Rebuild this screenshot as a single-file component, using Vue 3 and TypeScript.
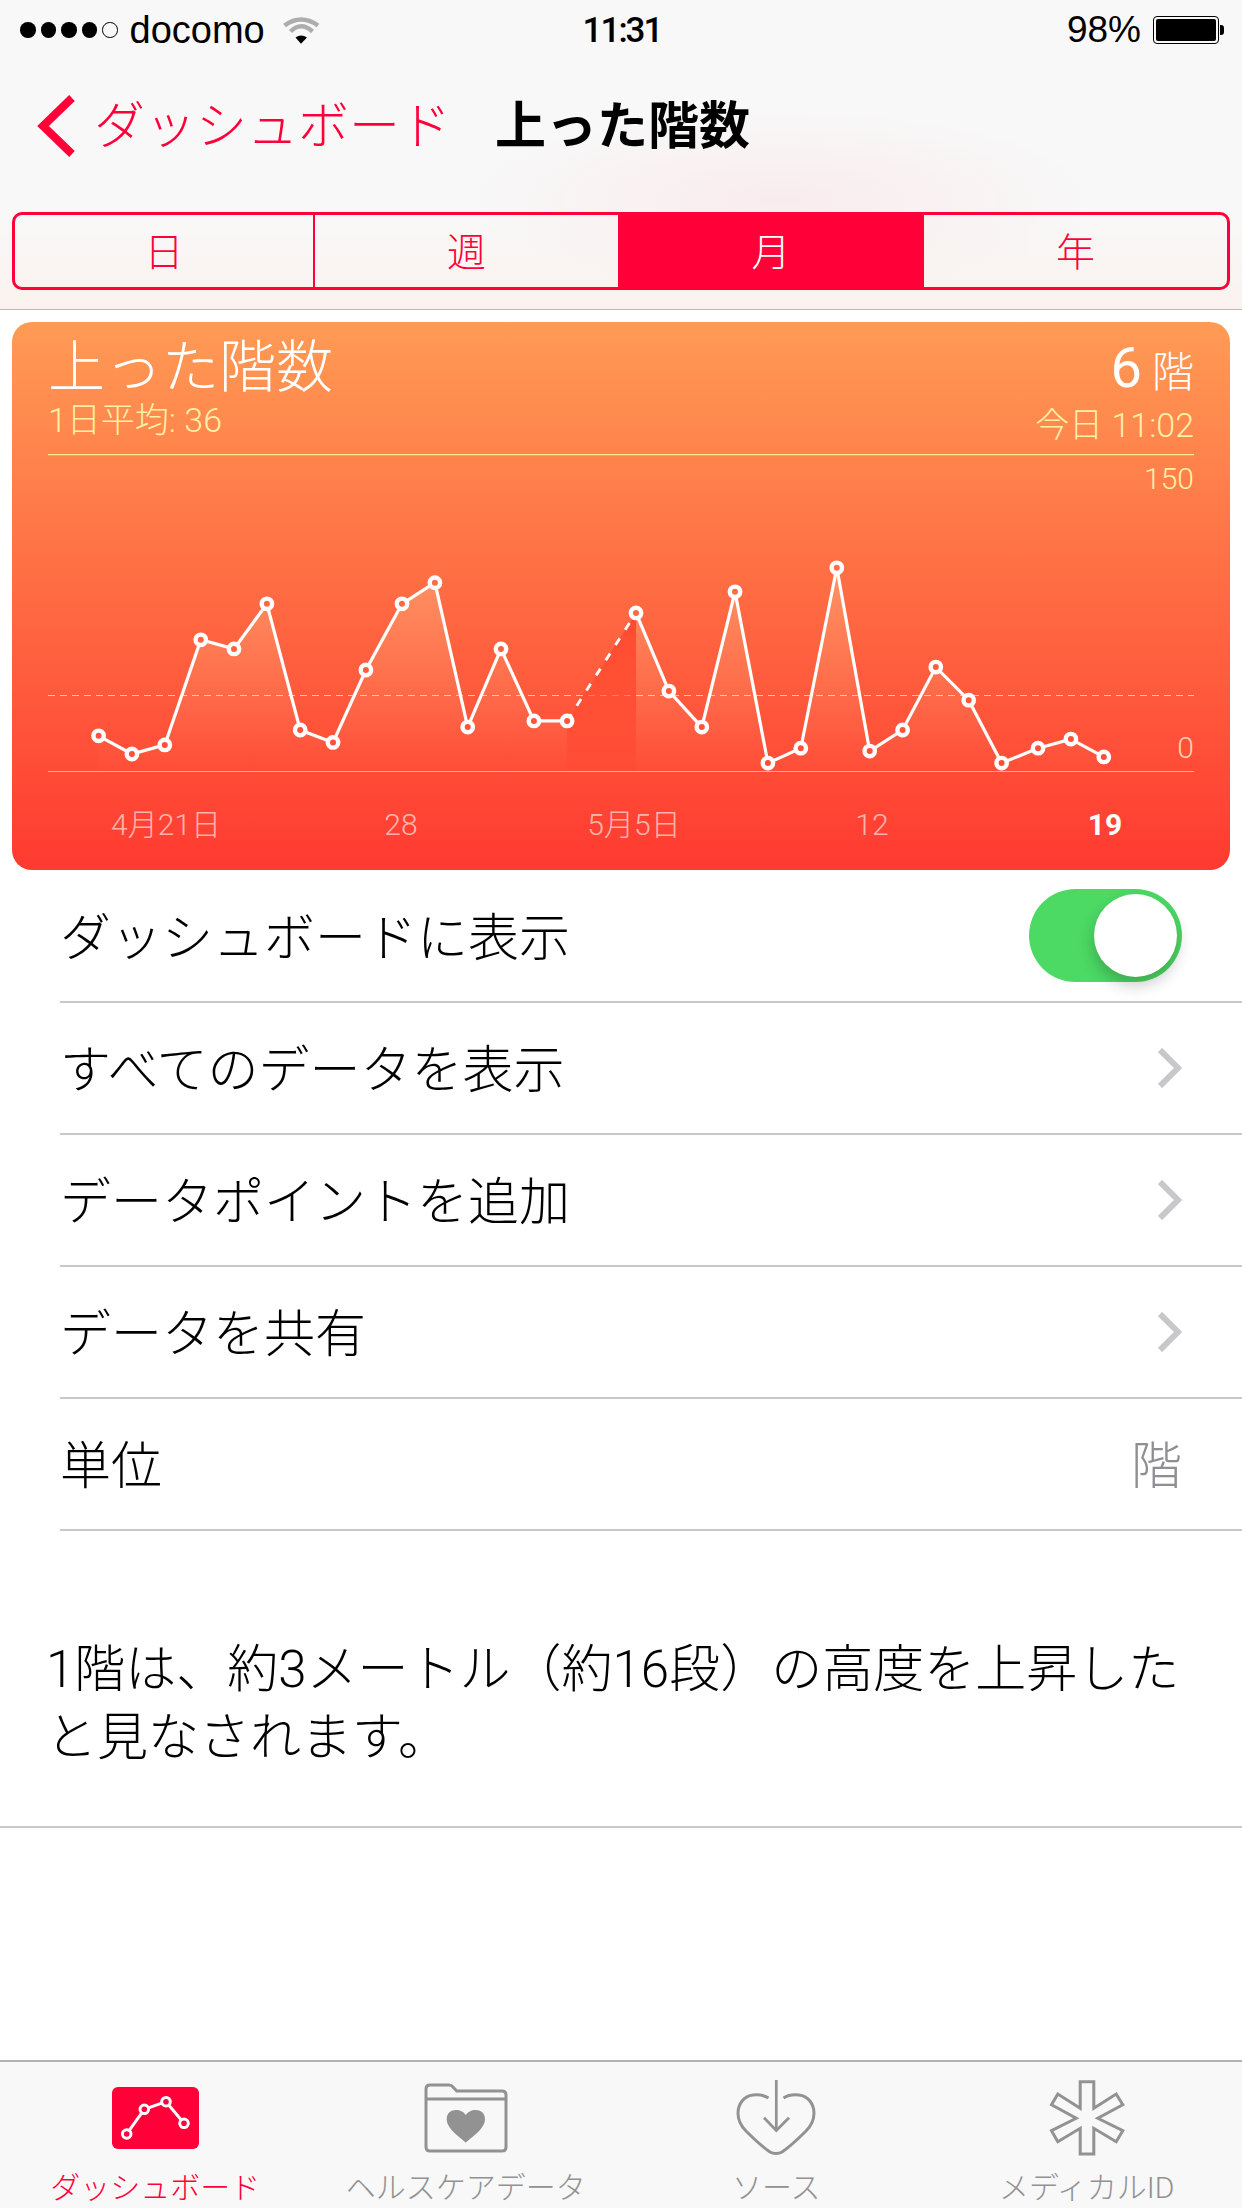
<script setup lang="ts">
const ROWS = [
  { label: 'すべてのデータを表示' },
  { label: 'データポイントを追加' },
  { label: 'データを共有' },
]

const TABS = ['ダッシュボード', 'ヘルスケアデータ', 'ソース', 'メディカルID']

const POINTS: [number, number][] = [
  [98.6, 735.8], [131.9, 754], [164.8, 744.9], [200.8, 639.8], [234, 648.9],
  [266.9, 603.8], [300.2, 730], [333, 742.4], [365.9, 670], [402, 603.8],
  [434.9, 582.7], [467.7, 727.1], [501, 648.9], [533.9, 720.9], [567.1, 720.9],
  [636, 612.9], [668.9, 691.1], [701.8, 727.1], [735, 591.8], [767.9, 763.1],
  [800.8, 748.2], [836.8, 567.8], [869.7, 751.1], [902.6, 730], [935.8, 667.1],
  [968.7, 700.2], [1001.6, 763.1], [1038, 748.2], [1070.9, 739.1], [1103.8, 756.9],
]

const BASE_Y = 771
const GAP = 15 // index of the first point after the days with no data

const toLine = (pts: [number, number][]) => pts.map((p) => p.join(',')).join(' ')
const toArea = (pts: [number, number][]) =>
  `${pts[0][0]},${BASE_Y} ${toLine(pts)} ${pts[pts.length - 1][0]},${BASE_Y}`

const before = POINTS.slice(0, GAP)
const after = POINTS.slice(GAP)
const gapPts = POINTS.slice(GAP - 1, GAP + 1)

const X_LABELS = [
  { text: '4月21日', x: 166 },
  { text: '28', x: 401 },
  { text: '5月5日', x: 634 },
  { text: '12', x: 872 },
]
</script>

<template>
  <div class="page">
    <div class="top">
      <div class="status">
        <div class="status__left">
          <span class="dots">
            <i v-for="n in 4" :key="n" class="dot"></i>
            <i class="dot dot--off"></i>
          </span>
          <span class="carrier">docomo</span>
          <svg class="wifi" width="38" height="28" viewBox="0 0 38 28">
            <path d="M1.5 9.5 Q18 -2.5 35 9.5" fill="none" stroke="#adadad" stroke-width="4.5" />
            <path d="M7.5 15.5 Q18 5 29.5 15.5" fill="none" stroke="#adadad" stroke-width="4.5" />
            <path d="M12.5 21.5 Q18 17.5 24 21.5 L18 27.7Z" fill="#000" />
          </svg>
        </div>
        <span class="time">11:31</span>
        <div class="status__right">
          <span class="percent">98%</span>
          <span class="battery"><i class="battery__fill"></i></span>
          <i class="battery__nub"></i>
        </div>
      </div>

      <div class="nav">
        <svg class="nav__chevron" width="40" height="62" viewBox="0 0 40 62">
          <path d="M36 3 L7 31 L36 59" fill="none" stroke="#ff0038" stroke-width="8" />
        </svg>
        <span class="nav__back">ダッシュボード</span>
        <span class="nav__title">上った階数</span>
      </div>

      <div class="seg-wrap">
        <div class="seg">
          <div class="seg__cell">日</div>
          <div class="seg__cell">週</div>
          <div class="seg__cell seg__cell--on">月</div>
          <div class="seg__cell">年</div>
        </div>
      </div>
    </div>

    <section class="card">
      <div class="card__head">
        <div class="card__col">
          <div class="card__title">上った階数</div>
          <div class="card__sub">1日平均: 36</div>
        </div>
        <div class="card__col card__col--right">
          <div class="card__value"><span class="card__num">6</span>階</div>
          <div class="card__sub">今日 11:02</div>
        </div>
      </div>
      <svg class="chart" width="1218" height="416" viewBox="12 454 1218 416">
        <defs>
          <linearGradient id="area" gradientUnits="userSpaceOnUse" x1="0" y1="565" x2="0" y2="775">
            <stop offset="0" stop-color="#ffd8a0" stop-opacity="0.34" />
            <stop offset="1" stop-color="#ffd8a0" stop-opacity="0" />
          </linearGradient>
          <linearGradient id="hole" gradientUnits="userSpaceOnUse" x1="0" y1="322" x2="0" y2="870">
            <stop offset="0" stop-color="#ff9b55" />
            <stop offset="1" stop-color="#ff3a30" />
          </linearGradient>
          <linearGradient id="missing" gradientUnits="userSpaceOnUse" x1="0" y1="610" x2="0" y2="771">
            <stop offset="0" stop-color="#ff4a30" />
            <stop offset="1" stop-color="#ff4a30" stop-opacity="0.25" />
          </linearGradient>
        </defs>

        <line x1="48" x2="1194" y1="454.5" y2="454.5" stroke="#ffee80" stroke-width="1.5" />
        <line x1="48" x2="1194" y1="695.5" y2="695.5" stroke="#ffc8a0" stroke-width="1.2" stroke-dasharray="7 5" />
        <line x1="48" x2="1194" y1="771.5" y2="771.5" stroke="#ffb080" stroke-width="1.2" />

        <polygon :points="toArea(before)" fill="url(#area)" />
        <polygon :points="toArea(after)" fill="url(#area)" />
        <polygon :points="toArea(gapPts)" fill="url(#missing)" />

        <polyline :points="toLine(before)" class="trace" />
        <polyline :points="toLine(after)" class="trace" />
        <polyline :points="toLine(gapPts)" class="trace trace--gap" stroke-dasharray="8 10" />

        <circle
          v-for="(p, i) in POINTS"
          :key="i"
          :cx="p[0]"
          :cy="p[1]"
          r="5.2"
          fill="url(#hole)"
          stroke="#fff"
          stroke-width="4.4"
        />

        <text x="1194" y="489" text-anchor="end" class="axis">150</text>
        <text x="1194" y="758" text-anchor="end" class="axis axis--zero">0</text>
        <text v-for="l in X_LABELS" :key="l.text" :x="l.x" y="835" text-anchor="middle" class="tick">{{ l.text }}</text>
        <text x="1105" y="835" text-anchor="middle" class="tick tick--today">19</text>
      </svg>
    </section>

    <ul class="rows">
      <li class="row">
        <span class="row__text">ダッシュボードに表示</span>
        <span class="toggle"><i class="toggle__knob"></i></span>
      </li>
      <li v-for="r in ROWS" :key="r.label" class="row">
        <span class="row__text">{{ r.label }}</span>
        <svg width="24" height="40" viewBox="0 0 24 40">
          <path d="M2 2 L20 20 L2 38" fill="none" stroke="#c7c7cc" stroke-width="6" />
        </svg>
      </li>
      <li class="row">
        <span class="row__text">単位</span>
        <span class="row__text row__value">階</span>
      </li>
    </ul>

    <p class="note">1階は、約3メートル（約16段）の高度を上昇したと見なされます。</p>

    <div class="spacer"></div>

    <nav class="tabs">
      <div v-for="(t, i) in TABS" :key="t" class="tab" :class="{ 'tab--on': i === 0 }">
        <div class="tab__icon">
          <svg v-if="i === 0" width="87" height="62" viewBox="0 0 87 62">
            <rect width="87" height="62" rx="6" fill="#ff0038" />
            <polyline points="14.7,47 32.3,22.3 54,14.7 72,36.3" fill="none" stroke="#fff" stroke-width="3" />
            <g fill="#ff0038" stroke="#fff" stroke-width="3">
              <circle cx="14.7" cy="47" r="4.3" />
              <circle cx="32.3" cy="22.3" r="4.3" />
              <circle cx="54" cy="14.7" r="4.3" />
              <circle cx="72" cy="36.3" r="4.3" />
            </g>
          </svg>
          <svg v-else-if="i === 1" width="84" height="70" viewBox="0 0 84 70">
            <path d="M2 6 Q2 2 6 2 H25 Q27.5 2 29 4 L32.7 8 H78 Q82 8 82 12 V64 Q82 68 78 68 H6 Q2 68 2 64Z" fill="none" stroke="#929292" stroke-width="3" />
            <path d="M2 16 H82" stroke="#929292" stroke-width="3" />
            <path d="M41.8 59.7 C36 54 22.7 46 22.7 36 C22.7 30 27 27 32 27 C36 27 40 29 41.8 32 C43.6 29 47.6 27 51.6 27 C56.6 27 61 30 61 36 C61 46 47.6 54 41.8 59.7Z" fill="#929292" />
          </svg>
          <svg v-else-if="i === 2" width="80" height="76" viewBox="0 0 80 76">
            <path d="M32.5 18 C28 15 22 14.5 17 15 C8 16 2 24 2 33 C2 40 5 46 10 51 C18 59 28 68 34 72 C37 74 43 74 46 72 C52 68 62 59 70 51 C75 46 78 40 78 33 C78 24 72 16 63 15 C58 14.5 52 15 47.5 18" fill="none" stroke="#929292" stroke-width="3" />
            <path d="M40.3 0 V50" stroke="#929292" stroke-width="2.7" />
            <path d="M28 37.7 L40.3 50.5 L53 37.7" fill="none" stroke="#929292" stroke-width="2.7" />
          </svg>
          <svg v-else width="76" height="76" viewBox="0 0 76 76">
            <path
              d="M31.2 1.7 H44.8 V28.3 L67.2 14 L73.8 24.7 L48.8 38.3 L73.8 50.7 L67.2 61.7 L44.8 48.3 V74 H31.2 V48.3 L8.8 61.7 L2.5 50.7 L27.2 38.3 L2.5 24.7 L8.8 14 L31.2 28.3Z"
              fill="none"
              stroke="#929292"
              stroke-width="3"
            />
          </svg>
        </div>
        <span class="tab__label">{{ t }}</span>
      </div>
    </nav>
  </div>
</template>

<style>
html,
body {
  margin: 0;
  background: #fff;
}
</style>

<style scoped>
.page {
  width: 1242px;
  height: 2208px;
  display: flex;
  flex-direction: column;
  overflow: hidden;
  background: #fff;
  color: #000;
  font-family: Roboto, "Noto Sans CJK JP", sans-serif;
}

.top {
  background:
    radial-gradient(ellipse 320px 90px at 780px 200px, rgba(255, 190, 200, 0.22), rgba(255, 190, 200, 0) 100%),
    linear-gradient(#f8f8f8 70%, #faf2ee);
  border-bottom: 1px solid #bbb;
}

.status {
  height: 60px;
  display: grid;
  grid-template-columns: 1fr auto 1fr;
  align-items: center;
  padding: 0 18px 0 20px;
  font-family: "Liberation Sans", sans-serif;
  font-size: 37px;
}

.status__left,
.status__right {
  display: flex;
  align-items: center;
}

.status__right {
  justify-content: flex-end;
}

.dots {
  display: flex;
  gap: 5px;
  margin-right: 12px;
}

.dot {
  width: 15.5px;
  height: 15.5px;
  border-radius: 50%;
  background: #000;
  box-sizing: border-box;
}

.dot--off {
  background: none;
  border: 1.5px solid #000;
}

.carrier {
  font-size: 38px;
}

.wifi {
  margin-left: 18px;
}

.time {
  font-family: Roboto, sans-serif;
  font-weight: 500;
  font-size: 35px;
  letter-spacing: -2px;
}

.percent {
  margin-right: 12px;
}

.battery {
  width: 66px;
  height: 28px;
  padding: 2px;
  border: 1.5px solid #000;
  border-radius: 4px;
  box-sizing: border-box;
  display: flex;
}

.battery__fill {
  flex: 1;
  background: #000;
  border-radius: 2px;
}

.battery__nub {
  width: 4px;
  height: 10px;
  margin-left: 1px;
  background: #000;
  border-radius: 0 3px 3px 0;
}

.nav {
  height: 131px;
  display: flex;
  align-items: center;
  padding-left: 36px;
  font-size: 51px;
}

.nav__back {
  margin-left: 18px;
  padding-bottom: 7px;
  color: #ff0038;
  font-weight: 300;
}

.nav__title {
  margin-left: 44px;
  padding-bottom: 7px;
  font-weight: 700;
}

.seg-wrap {
  padding: 21px 12px 19px;
}

.seg {
  height: 78px;
  display: grid;
  grid-template-columns: 300px 303px 306px 1fr;
  border: 3px solid #ff0038;
  border-radius: 10px;
  overflow: hidden;
  box-sizing: border-box;
}

.seg__cell {
  display: flex;
  align-items: center;
  justify-content: center;
  padding-bottom: 5px;
  color: #ff0038;
  font-size: 39px;
  font-weight: 300;
}

.seg__cell:first-child {
  border-right: 2px solid #ff0038;
}

.seg__cell--on {
  background: #ff0038;
  color: #fff;
}

.card {
  margin: 12px 12px 0;
  height: 548px;
  border-radius: 20px;
  overflow: hidden;
  background: linear-gradient(#ff9b55, #ff3a30);
  color: #fff;
}

.card__head {
  height: 132px;
  padding: 13px 36px 0;
  box-sizing: border-box;
  display: flex;
  justify-content: space-between;
}

.card__col {
  display: flex;
  flex-direction: column;
}

.card__col--right {
  align-items: flex-end;
}

.card__title {
  font-size: 57px;
  line-height: 66px;
  font-weight: 300;
}

.card__value {
  font-size: 42px;
  line-height: 66px;
  font-weight: 300;
}

.card__num {
  margin-right: 10px;
  font-size: 56px;
  font-weight: 400;
}

.card__sub {
  margin-top: 1px;
  font-size: 34px;
  line-height: 36px;
  color: #fff0a8;
  font-weight: 300;
}

.chart {
  display: block;
}

.trace {
  fill: none;
  stroke: #fff;
  stroke-width: 3.2;
}

.trace--gap {
  stroke-width: 2.8;
}

.axis {
  font-size: 30px;
  fill: #fff0a8;
  font-weight: 300;
}

.axis--zero {
  fill: #ffd0b0;
}

.tick {
  font-size: 30px;
  fill: rgba(255, 255, 255, 0.62);
  font-weight: 300;
}

.tick--today {
  fill: #fff;
  font-weight: 700;
}

.rows {
  list-style: none;
  margin: 0;
  padding: 1px 0 0;
}

.row {
  height: 132px;
  margin-left: 60px;
  padding-right: 60px;
  box-sizing: border-box;
  display: flex;
  align-items: center;
  justify-content: space-between;
  border-bottom: 2px solid #c8c7cc;
  font-size: 51px;
  font-weight: 300;
}

.row__text {
  padding-bottom: 5px;
}

.row__value {
  color: #8e8e93;
}

.toggle {
  position: relative;
  width: 153px;
  height: 93px;
  margin-bottom: 2px;
  border-radius: 47px;
  background: #4cd964;
}

.toggle__knob {
  position: absolute;
  top: 5px;
  right: 5px;
  width: 83px;
  height: 83px;
  border-radius: 50%;
  background: #fff;
  box-shadow: 0 8px 16px rgba(0, 0, 0, 0.22);
}

.note {
  margin: 0;
  padding: 105px 48px 54px 46px;
  font-size: 51px;
  line-height: 68px;
  font-weight: 300;
  border-bottom: 2px solid #c8c7cc;
}

.spacer {
  flex: 1;
}

.tabs {
  height: 148px;
  display: grid;
  grid-template-columns: repeat(4, 1fr);
  background: #f8f8f8;
  border-top: 2px solid #b2b2b2;
  box-sizing: border-box;
}

.tab {
  display: flex;
  flex-direction: column;
  align-items: center;
  color: #929292;
}

.tab--on {
  color: #ff0038;
}

.tab__icon {
  height: 106px;
  padding-top: 6px;
  box-sizing: border-box;
  display: flex;
  align-items: center;
  justify-content: center;
}

.tab__label {
  font-size: 30px;
  line-height: 40px;
  font-weight: 300;
  white-space: nowrap;
}
</style>
